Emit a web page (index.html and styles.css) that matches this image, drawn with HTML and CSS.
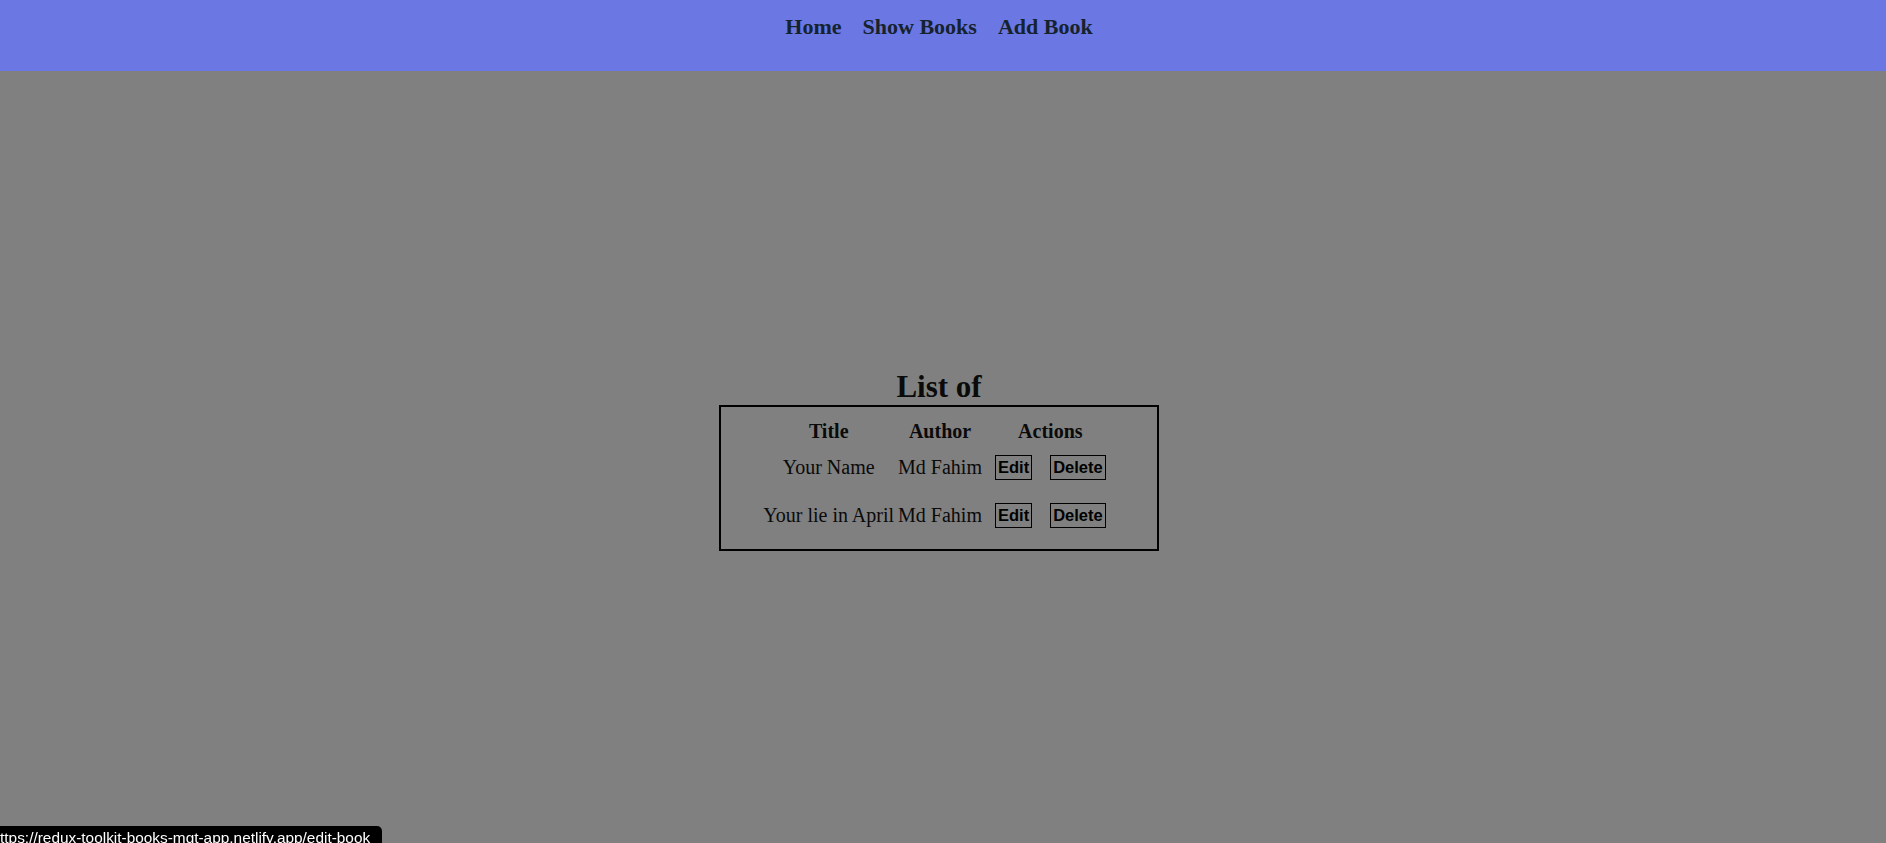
FILE: index.html
```html
<!DOCTYPE html>
<html lang="en">
<head>
<meta charset="utf-8">
<title>Books</title>
<link rel="stylesheet" href="styles.css">
</head>
<body>
<header class="topbar">
  <nav class="nav">
    <a class="nav-link" href="#">Home</a>
    <a class="nav-link" href="#">Show Books</a>
    <a class="nav-link" href="#">Add Book</a>
  </nav>
</header>
<main class="main">
  <h1 class="title">List of</h1>
  <table class="books">
    <thead>
      <tr><th>Title</th><th>Author</th><th>Actions</th></tr>
    </thead>
    <tbody>
      <tr>
        <td>Your Name</td>
        <td>Md Fahim</td>
        <td><div class="actions"><button class="btn">Edit</button><button class="btn">Delete</button></div></td>
      </tr>
      <tr>
        <td>Your lie in April</td>
        <td>Md Fahim</td>
        <td><div class="actions"><button class="btn">Edit</button><button class="btn">Delete</button></div></td>
      </tr>
    </tbody>
  </table>
</main>
<div class="status-bubble"><span class="status-text">https://redux-toolkit-books-mgt-app.netlify.app/edit-book</span></div>
</body>
</html>
```
FILE: styles.css
```css
html, body {
  margin: 0;
  padding: 0;
}
body {
  background: #808080;
  font-family: "Liberation Serif", "Times New Roman", serif;
  color: #0a0a0a;
  overflow: hidden;
}
.topbar {
  height: 71px;
  background: #6b77e3;
  box-sizing: border-box;
  padding-top: 14px;
}
.nav {
  display: flex;
  justify-content: center;
  gap: 21px;
  padding-right: 8px;
}
.nav-link {
  font-size: 22px;
  font-weight: bold;
  color: #14232d;
  text-decoration: none;
  line-height: 25px;
}
.main {
  height: calc(100vh - 71px);
  display: flex;
  flex-direction: column;
  align-items: center;
  justify-content: center;
  padding-right: 8px;
  padding-top: 6px;
  box-sizing: border-box;
}
.title {
  margin: 0;
  font-size: 31px;
  line-height: 36px;
  font-weight: bold;
}
.books {
  border: 2px solid #000;
  border-spacing: 2px;
  padding: 8px 39px 8px;
  font-size: 20px;
}
.books th {
  padding: 2.5px 1px 0;
  font-weight: bold;
}
.books td {
  padding: 10.6px 1px;
  text-align: center;
}
.actions {
  display: flex;
  justify-content: center;
  gap: 18px;
  padding: 0 9px;
}
.btn {
  font-family: "Liberation Sans", Arial, sans-serif;
  font-size: 16.5px;
  font-weight: bold;
  line-height: 19px;
  padding: 2px 2px;
  border: 1px solid #000;
  background: #808080;
  color: #000;
  border-radius: 0;
  margin: 0;
}
.status-bubble {
  position: fixed;
  left: 0;
  bottom: -6px;
  width: 382px;
  height: 23px;
  background: #000;
  border-top-right-radius: 5px;
  overflow: hidden;
  box-sizing: border-box;
  padding-top: 3px;
}
.status-text {
  display: block;
  margin-left: -8.5px;
  font-family: "Liberation Sans", Arial, sans-serif;
  font-size: 15.4px;
  line-height: 18px;
  color: #fff;
  white-space: nowrap;
}
```
